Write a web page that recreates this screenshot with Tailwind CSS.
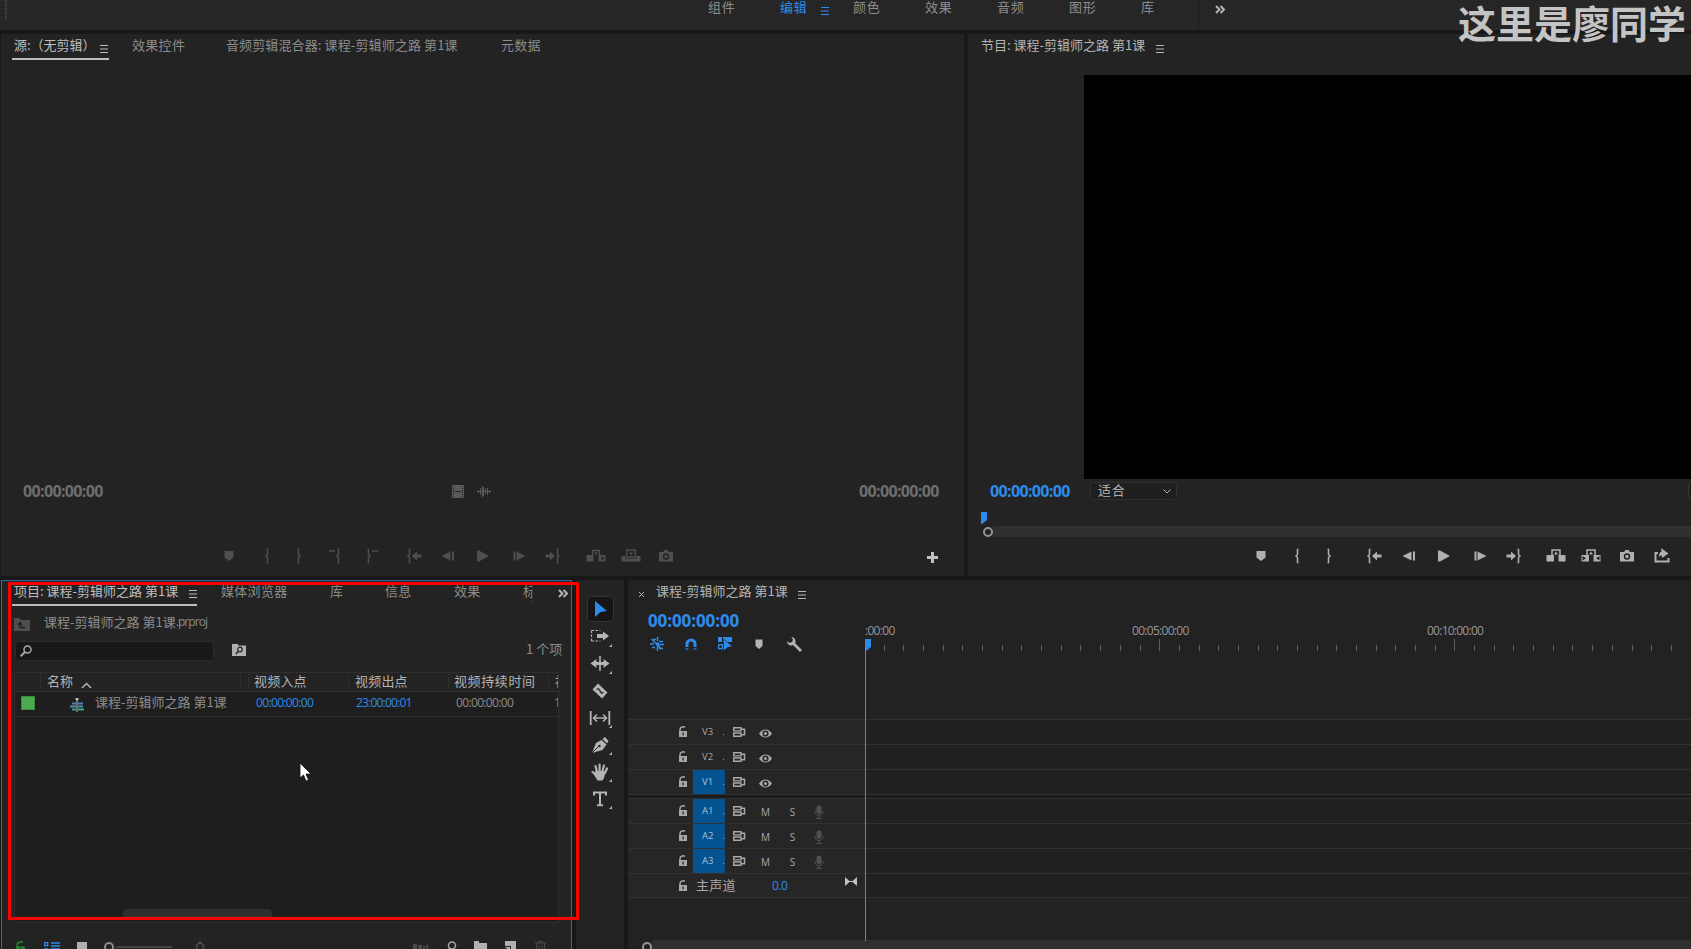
<!DOCTYPE html>
<html lang="zh-CN">
<head>
<meta charset="utf-8">
<meta name="viewport" content="width=device-width,initial-scale=1">
<title>课程-剪辑师之路 第1课</title>
<script src="https://cdn.jsdelivr.net/npm/@tailwindcss/browser@4"></script>
</head>
<body class="relative w-[1691px] h-[949px] overflow-hidden bg-[#181818] text-[#8c8c8c] text-[13px] leading-4 whitespace-nowrap font-['Noto_Sans_CJK_SC','Open_Sans',sans-serif] select-none">

<!-- ICONS -->
<svg class="hidden">
  <symbol id="menu" viewBox="0 0 8 8"><path d="M0 .5h8M0 4h8M0 7.5h8" stroke="currentColor"/></symbol>
  <symbol id="more" viewBox="0 0 10 9"><path d="M1 1l3.5 3.5L1 8M5.5 1L9 4.5 5.5 8" fill="none" stroke="currentColor" stroke-width="2"/></symbol>
  <symbol id="marker" viewBox="0 0 24 24"><path d="M7.5 7h9v6.5L12 17l-4.5-3.500z" fill="currentColor"/></symbol>
  <symbol id="in" viewBox="0 0 24 24"><path d="M13.500 5.500h-1v5L11 12l1.500 1.500v5h1" fill="none" stroke="currentColor" stroke-width="1.500"/></symbol>
  <symbol id="out" viewBox="0 0 24 24"><path d="M10.500 5.500h1v5L13 12l-1.500 1.500v5h-1" fill="none" stroke="currentColor" stroke-width="1.500"/></symbol>
  <symbol id="vin" viewBox="0 0 24 24"><path d="M6 7h6M16.500 5.500h-1v5L14 12l1.500 1.500v5h1" fill="none" stroke="currentColor" stroke-width="1.500"/></symbol>
  <symbol id="vout" viewBox="0 0 24 24"><path d="M12 7h6M7.500 5.500h1v5L10 12l-1.500 1.500v5h-1" fill="none" stroke="currentColor" stroke-width="1.500"/></symbol>
  <symbol id="goin" viewBox="0 0 24 24"><path d="M8.500 5.500h-1v5L6 12l1.500 1.500v5h1" fill="none" stroke="currentColor" stroke-width="1.500"/><path d="M10 12l5-4.500v3h4.500v3H15v3z" fill="currentColor"/></symbol>
  <symbol id="goout" viewBox="0 0 24 24"><path d="M15.500 5.500h1v5L18 12l-1.500 1.500v5h-1" fill="none" stroke="currentColor" stroke-width="1.500"/><path d="M14 12L9 7.500v3H4.500v3H9v3z" fill="currentColor"/></symbol>
  <symbol id="back" viewBox="0 0 24 24"><path d="M5.500 12l9-4.500v9zM16 7.500h2v9h-2z" fill="currentColor"/></symbol>
  <symbol id="fwd" viewBox="0 0 24 24"><path d="M18.500 12l-9-4.500v9zM6.500 7.500h2v9h-2z" fill="currentColor"/></symbol>
  <symbol id="play" viewBox="0 0 24 24"><path d="M6 6.500h2l10 5.500-10 5.500H6z" fill="currentColor"/></symbol>
  <symbol id="insert" viewBox="0 0 24 24"><path d="M8.500 12V6.500h7V12" fill="none" stroke="currentColor" stroke-width="1.300"/><path d="M2.500 11h7v6.500h-7zM14.500 11h7v6.500h-7z" fill="currentColor"/><path d="M10 8.500h4l-2 3z" fill="currentColor"/><path d="M17.500 12l3 2.200-3 2.300z" fill="#232323"/></symbol>
  <symbol id="overwrite" viewBox="0 0 24 24"><path d="M2.500 12h4v2.500h11V12h4v5.500h-19z" fill="currentColor"/><path d="M7.700 13V6h8.600v7z" fill="none" stroke="currentColor" stroke-width="1.300"/><path d="M10 8.500h4l-2 3z" fill="currentColor"/></symbol>
  <symbol id="lift" viewBox="0 0 24 24"><path d="M8 12V6h8v6" fill="none" stroke="currentColor" stroke-width="1.500"/><path d="M2.500 11H10v6.500H2.500zM14.500 11h7v6.500h-7z" fill="currentColor"/><path d="M10 10.500h4L12 7.500z" fill="currentColor"/></symbol>
  <symbol id="extract" viewBox="0 0 24 24"><path d="M8 12V6h8v6" fill="none" stroke="currentColor" stroke-width="1.500"/><path d="M2.500 11H10v6.500H2.500zM14.500 11h7v6.500h-7z" fill="currentColor"/><path d="M10 10.500h4L12 7.500z" fill="currentColor"/><path d="M3.500 12l3.500 2.300-3.500 2.300zM20.500 12L17 14.300l3.500 2.300z" fill="#232323"/></symbol>
  <symbol id="camera" viewBox="0 0 24 24"><path d="M5 8h4l1.500-2h3L15 8h4v9.500H5z" fill="currentColor"/><circle cx="12" cy="12.500" r="2.500" fill="none" stroke="#232323" stroke-width="1.500"/></symbol>
  <symbol id="export" viewBox="0 0 24 24"><path d="M8 9H5.500v8.500h13V14" fill="none" stroke="currentColor" stroke-width="2"/><path d="M11 4l7.500 5.500L12 14v-2.500c-1.500 0-2.500.5-3 2 0-3.500.500-5.500 2.500-6z" fill="currentColor"/></symbol>
  <symbol id="lock" viewBox="0 0 10 12"><path d="M2 6V3.500C2 .8 6 .2 6.800 1.600" fill="none" stroke="currentColor" stroke-width="1.500"/><path d="M1 5h8v6H1z" fill="currentColor"/><path d="M4.500 6.500h1.300v3H4.500z" fill="#262626"/></symbol>
  <symbol id="target" viewBox="0 0 13 10"><path d="M.7.700h7.300v3.200H.7zM.7 6h7.300v3.300H.7z" fill="none" stroke="currentColor" stroke-width="1.400"/><path d="M8 2.300h3.500v5.500H8" fill="none" stroke="currentColor" stroke-width="1.500"/></symbol>
  <symbol id="eye" viewBox="0 0 13 9"><path d="M0 4.500C3.500-.8 9.500-.8 13 4.500 9.500 9.800 3.500 9.800 0 4.500z" fill="currentColor"/><circle cx="6.500" cy="4.500" r="2.300" fill="none" stroke="#262626" stroke-width="1.600"/></symbol>
  <symbol id="mic" viewBox="0 0 10 14"><rect x="2.500" y=".5" width="5" height="8.500" rx="2.500" fill="currentColor"/><path d="M.8 6c0 6 8.400 6 8.400 0M5 10.500v3M2 13.400h6" fill="none" stroke="currentColor"/></symbol>
  <symbol id="head" viewBox="0 0 6 12"><path d="M0 0h6v8l-5 4H0z" fill="#2d8ceb"/></symbol>
  <symbol id="seq" viewBox="0 0 14 14"><path d="M2 4.500h4v2H2zM8 4.500h5v2H8z" fill="#5b7fb5"/><path d="M0 7.500h6v2H0zM8 7.500h5v2H8z" fill="#4c8fb0"/><path d="M2 10.500h4v2H2zM8 10.500h6v2H8z" fill="#35a58c"/><path d="M7 0v14" stroke="#b9b9b9"/><path d="M5.500 0h3v1.500L7 3 5.500 1.500z" fill="#b9b9b9"/></symbol>
</svg>

<div class="flex flex-col">

  <!-- WORKSPACE BAR -->
  <header class="flex h-[30px] bg-[#262626] pl-[5px]">
    <div class="w-[2px] h-5 bg-[repeating-linear-gradient(#4a4a4a_0_1px,transparent_1px_2px)]"></div>
    <nav class="flex ml-[701px] -mt-px tracking-[0.8px]">
      <span class="w-[72px]">组件</span>
      <span class="w-[41px] text-[#2d8ceb]">编辑</span>
      <svg class="w-2 h-2 mt-2 mr-[24px] text-[#2d8ceb]"><use href="#menu"/></svg>
      <span class="w-[72px]">颜色</span>
      <span class="w-[72px]">效果</span>
      <span class="w-[72px]">音频</span>
      <span class="w-[72px]">图形</span>
      <span class="w-[57px]">库</span>
    </nav>
    <div class="w-px h-full bg-[#1c1c1c]"></div>
    <svg class="w-[10px] h-[9px] mt-[5px] ml-4 text-[#b4b4b4]"><use href="#more"/></svg>
  </header>

  <div class="flex h-[542px] mt-1 pl-px gap-1">

    <!-- SOURCE MONITOR -->
    <section class="flex flex-col w-[963px] bg-[#232323]">
      <div class="flex h-[26px] pl-[11px]">
        <div class="flex w-[97px] h-[26px] border-b-2 border-[#bdbdbd] pl-[2px] pt-[3px] text-[#bdbdbd]">
          <span class="w-[86px]">源:（无剪辑）</span>
          <svg class="w-2 h-2 mt-2"><use href="#menu"/></svg>
        </div>
        <span class="ml-[23px] pt-[3px] w-[94px] tracking-[0.3px]">效果控件</span>
        <span class="pt-[3px] w-[275px] tracking-[0.12px]">音频剪辑混合器: 课程-剪辑师之路 第1课</span>
        <span class="pt-[3px] tracking-[0.3px]">元数据</span>
      </div>
      <div class="flex items-center h-[24px] mt-[419px] pl-[22px] font-['Open_Sans'] font-bold text-[16px] tracking-[-0.65px] text-[#6e6e6e]">
        <span class="w-[429px] shrink-0">00:00:00:00</span>
        <svg class="w-3 h-[13px] mr-[13px] shrink-0" viewBox="0 0 12 13"><path d="M0 0h12v13H0z" fill="#5a5a5a"/><path d="M1.500 1v12M10.500 1v12" stroke="#232323" stroke-dasharray="1 1"/><path d="M3 6.500h6" stroke="#232323"/></svg>
        <svg class="w-[14px] h-[11px] mr-[368px] shrink-0" viewBox="0 0 14 11"><path d="M0 5.500h14M1.500 4v3M3.500 2v7M5.500 0v11M6.500 1v9M8.500 3v5M10.500 2v7M12.500 4v3" stroke="#5a5a5a"/></svg>
        <span>00:00:00:00</span>
      </div>
      <div class="flex mt-[41px] pl-[216px] text-[#4f4f4f]">
        <svg class="w-6 h-6 shrink-0"><use href="#marker"/></svg>
        <svg class="w-6 h-6 ml-[14px] shrink-0"><use href="#in"/></svg>
        <svg class="w-6 h-6 ml-2 shrink-0"><use href="#out"/></svg>
        <svg class="w-6 h-6 ml-3 shrink-0"><use href="#vin"/></svg>
        <svg class="w-6 h-6 ml-[13px] shrink-0"><use href="#vout"/></svg>
        <svg class="w-6 h-6 ml-[18px] shrink-0"><use href="#goin"/></svg>
        <svg class="w-6 h-6 ml-[10px] shrink-0"><use href="#back"/></svg>
        <svg class="w-6 h-6 ml-[11px] shrink-0"><use href="#play"/></svg>
        <svg class="w-6 h-6 ml-3 shrink-0"><use href="#fwd"/></svg>
        <svg class="w-6 h-6 ml-[10px] shrink-0"><use href="#goout"/></svg>
        <svg class="w-6 h-6 ml-[19px] shrink-0"><use href="#insert"/></svg>
        <svg class="w-6 h-6 ml-[11px] shrink-0"><use href="#overwrite"/></svg>
        <svg class="w-6 h-6 ml-[11px] shrink-0"><use href="#camera"/></svg>
        <svg class="w-[11px] h-[11px] ml-[249px] mt-2 shrink-0 text-[#c0c0c0]" viewBox="0 0 11 11"><path d="M5.500 0v11M0 5.500h11" stroke="currentColor" stroke-width="3"/></svg>
      </div>
    </section>

    <!-- PROGRAM MONITOR -->
    <section class="flex flex-col w-[723px] bg-[#232323]">
      <div class="flex h-[41px] pl-[13px] pt-[3px] text-[#b4b4b4]">
        <span class="w-[175px]">节目: 课程-剪辑师之路 第1课</span>
        <svg class="w-2 h-2 mt-2"><use href="#menu"/></svg>
      </div>
      <div class="h-[404px] ml-[116px] bg-black"></div>
      <div class="flex items-center h-[24px] pl-[22px] overflow-hidden">
        <span class="w-[100px] shrink-0 font-['Open_Sans'] font-bold text-[16px] tracking-[-0.65px] text-[#2d8ceb]">00:00:00:00</span>
        <div class="flex items-center w-[87px] h-[18px] shrink-0 rounded-sm border border-[#303030] bg-[#1f1f1f] pl-[7px] text-[#b4b4b4]">
          <span class="w-[65px] tracking-[0.8px] -mt-0.5">适合</span>
          <svg class="w-2 h-[5px] shrink-0" viewBox="0 0 8 5"><path d="M.5.5L4 4l3.500-3.500" fill="none" stroke="currentColor"/></svg>
        </div>
        <div class="w-4 h-[18px] ml-[511px] shrink-0 rounded-sm border border-[#383838] bg-[#1f1f1f]"></div>
      </div>
      <svg class="w-[6px] h-3 mt-[9px] ml-[13px]"><use href="#head"/></svg>
      <div class="flex items-center h-[11px] mt-0.5 ml-[15px]">
        <div class="w-[10px] h-[10px] rounded-full border-2 border-[#949494]"></div>
        <div class="flex-1 h-[11px] bg-[#303030]"></div>
      </div>
      <div class="flex mt-[7px] pl-[281px] text-[#b0b0b0]">
        <svg class="w-6 h-6"><use href="#marker"/></svg>
        <svg class="w-6 h-6 ml-3"><use href="#in"/></svg>
        <svg class="w-6 h-6 ml-2"><use href="#out"/></svg>
        <svg class="w-6 h-6 ml-[21px]"><use href="#goin"/></svg>
        <svg class="w-6 h-6 ml-[11px]"><use href="#back"/></svg>
        <svg class="w-6 h-6 ml-[11px]"><use href="#play"/></svg>
        <svg class="w-6 h-6 ml-3"><use href="#fwd"/></svg>
        <svg class="w-6 h-6 ml-[10px]"><use href="#goout"/></svg>
        <svg class="w-6 h-6 ml-[18px]"><use href="#lift"/></svg>
        <svg class="w-6 h-6 ml-[11px]"><use href="#extract"/></svg>
        <svg class="w-6 h-6 ml-3"><use href="#camera"/></svg>
        <svg class="w-6 h-6 ml-[11px]"><use href="#export"/></svg>
      </div>
    </section>
  </div>

  <div class="flex h-[369px] mt-1 pl-px gap-1">

    <!-- PROJECT PANEL -->
    <section class="flex flex-col w-[571px] border border-b-0 border-[#2f6ca8] bg-[#232323]">
      <div class="flex h-[25px] pl-[10px] tracking-[0.3px]">
        <div class="flex w-[185px] h-[25px] border-b-2 border-[#bdbdbd] pl-[2px] pt-[2px] text-[#bdbdbd]">
          <span class="w-[175px] tracking-normal">项目: 课程-剪辑师之路 第1课</span>
          <svg class="w-2 h-2 mt-[7px]"><use href="#menu"/></svg>
        </div>
        <span class="ml-[24px] pt-[2px] w-[109px]">媒体浏览器</span>
        <span class="pt-[2px] w-[55px]">库</span>
        <span class="pt-[2px] w-[69px]">信息</span>
        <span class="pt-[2px] w-[69px]">效果</span>
        <span class="mt-[2px] w-[10px] h-[20px] overflow-hidden border-r border-[#353535]">标</span>
        <svg class="w-[10px] h-[9px] mt-2 ml-[25px] text-[#b4b4b4]"><use href="#more"/></svg>
      </div>
      <div class="flex pl-3 mt-2">
        <svg class="w-4 h-[13px] mt-[4px] mr-[14px]" viewBox="0 0 16 13"><path d="M0 0h6v2h10v11H0z" fill="#4d4d4d"/><path d="M11 9.500H6V5M4 7l2-2.500L8 7" fill="none" stroke="#1f1f1f" stroke-width="1.300"/></svg>
        <span>课程-剪辑师之路 第1课</span><span class="font-['Open_Sans'] text-[12px] tracking-[-0.9px]">.prproj</span>
      </div>
      <div class="flex items-center h-5 pl-[13px] mt-[10px]">
        <div class="flex items-center w-[199px] h-5 pl-[4px] shrink-0 rounded-sm border border-[#2c2c2c] bg-[#181818]">
          <svg class="w-3 h-3" viewBox="0 0 12 12"><circle cx="7.500" cy="4.500" r="3.500" fill="none" stroke="#a8a8a8" stroke-width="1.500"/><path d="M5 7L.7 11.300" stroke="#a8a8a8" stroke-width="2"/></svg>
        </div>
        <svg class="w-[14px] h-3 ml-[18px] mr-[280px] -mt-0.5 shrink-0" viewBox="0 0 14 12"><path d="M0 0h6v1.500h8V12H0z" fill="#b0b0b0"/><circle cx="8" cy="5.500" r="2.300" fill="none" stroke="#232323" stroke-width="1.200"/><path d="M6.500 7.200L3.800 10" stroke="#232323" stroke-width="1.500"/></svg>
        <span class="-mt-1">1 个项</span>
      </div>
      <!-- clip list -->
      <div class="flex flex-col w-[545px] h-[251px] mt-[11px] ml-3 border border-[#2e2e2e] bg-[#1e1e1e]">
        <div class="flex items-center h-[19px] border-b border-[#303030] bg-[#232323] text-[#b4b4b4] overflow-hidden">
          <div class="w-[26px] h-[19px] shrink-0 border-r border-[#2e2e2e]"></div>
          <div class="flex w-[200px] h-[19px] pl-[6px] shrink-0 border-r border-[#2e2e2e]"><span class="w-[34px]">名称</span><svg class="w-[11px] h-[7px] mt-[9px]" viewBox="0 0 11 7"><path d="M1 6l4.500-4.500L10 6" fill="none" stroke="currentColor" stroke-width="1.500"/></svg></div>
          <div class="w-[8px] h-[19px] shrink-0 border-r border-[#2e2e2e]"></div>
          <div class="w-[100px] h-[19px] pl-[5px] shrink-0 border-r border-[#2e2e2e] tracking-[0.2px]">视频入点</div>
          <div class="w-[100px] h-[19px] pl-[6px] shrink-0 border-r border-[#2e2e2e] tracking-[0.2px]">视频出点</div>
          <div class="w-[100px] h-[19px] pl-[5px] shrink-0 tracking-[0.6px] border-r border-[#2e2e2e]">视频持续时间</div>
          <div class="w-[10px] h-[19px] pl-[6px] overflow-hidden">视</div>
        </div>
        <div class="flex items-center h-[25px] border-b border-[#2c2c2c] pl-[6px] pb-1 overflow-hidden">
          <div class="w-[14px] h-[14px] shrink-0 mt-0.5 bg-[#4caa50] border border-[#3b8a40]"></div>
          <svg class="w-[14px] h-[14px] shrink-0 ml-[35px] mr-[11px] mt-[5px]"><use href="#seq"/></svg>
          <span class="w-[161px] shrink-0">课程-剪辑师之路 第1课</span>
          <span class="w-[100px] shrink-0 mt-0.5 font-['Open_Sans'] text-[12px] tracking-[-0.65px] text-[#2d8ceb]">00:00:00:00</span>
          <span class="w-[100px] shrink-0 mt-0.5 font-['Open_Sans'] text-[12px] tracking-[-0.8px] text-[#2d8ceb]">23:00:00:01</span>
          <span class="w-[98px] shrink-0 mt-0.5 font-['Open_Sans'] text-[12px] tracking-[-0.65px]">00:00:00:00</span>
          <span class="w-[6px] mt-0.5 overflow-hidden font-['Open_Sans'] text-[12px]">1</span>
        </div>
        <div class="w-[149px] h-[11px] mt-[192px] ml-[108px] rounded-t-sm bg-[#2f2f2f] shrink-0"></div>
      </div>
      <div class="flex mt-[18px] h-[8px] pl-[13px] text-[#a8a8a8] overflow-hidden">
        <svg class="w-[11px] h-[13px] shrink-0 text-[#1c8a2c]"><use href="#lock"/></svg>
        <svg class="w-4 h-[13px] ml-[18px] shrink-0 text-[#2d8ceb]" viewBox="0 0 16 13"><path d="M.7 1.700h3v3h-3zM.7 8h3v3h-3zM7 2h9M7 5h9M7 8h9M7 11h9" fill="none" stroke="currentColor" stroke-width="1.300"/></svg>
        <div class="w-[10px] h-[10px] ml-[17px] mt-px shrink-0 bg-[#b0b0b0]"></div>
        <div class="w-[10px] h-[10px] ml-[17px] mt-px shrink-0 rounded-full border-2 border-[#8c8c8c]"></div>
        <div class="w-[56px] h-[2px] ml-[2px] mt-[5px] shrink-0 bg-[#454545]"></div>
        <svg class="w-[10px] h-3 ml-[23px] shrink-0 text-[#4d4d4d]" viewBox="0 0 10 12"><path d="M1 5l4-4 4 4-1 1v5M1 5l1 1v5" fill="none" stroke="currentColor" stroke-width="1.500"/></svg>
        <svg class="w-[15px] h-3 ml-[208px] mt-px shrink-0 text-[#4a4a4a]" viewBox="0 0 15 12"><path d="M0 2h4v10H0zM5 3h4v9H5zM10 4h2v8h-2zM13 3h2v9h-2z" fill="currentColor"/></svg>
        <svg class="w-[10px] h-[13px] ml-[19px] shrink-0" viewBox="0 0 10 13"><circle cx="5" cy="4.500" r="3.500" fill="none" stroke="currentColor" stroke-width="1.500"/><path d="M3 7L0 12" stroke="currentColor" stroke-width="2"/></svg>
        <svg class="w-[13px] h-3 ml-[17px] shrink-0" viewBox="0 0 13 12"><path d="M0 0h5v2h8v10H0z" fill="#b0b0b0"/></svg>
        <svg class="w-[11px] h-3 ml-[18px] shrink-0" viewBox="0 0 11 12"><path d="M0 0h11v12H6V5H0z" fill="#b0b0b0"/><path d="M0 6h5v4z" fill="#b0b0b0"/></svg>
        <svg class="w-[11px] h-3 ml-[19px] shrink-0 text-[#4a4a4a]" viewBox="0 0 11 12"><path d="M0 2h11M3.500 2V.5h4V2M1.500 2v10M4 4v8M7 4v8M9.500 2v10" fill="none" stroke="currentColor"/></svg>
      </div>
    </section>

    <!-- TOOLS -->
    <section class="flex flex-col items-center w-[48px] bg-[#232323] pt-4 text-[#b4b4b4]">
      <div class="flex items-center justify-center w-[27px] h-[26px] rounded-sm border border-[#333] bg-[#161616]">
        <svg class="w-3 h-4 ml-px" viewBox="0 0 12 16"><path d="M0 0l12 10-6.500 1L0 16z" fill="#2d8ceb"/></svg>
      </div>
      <svg class="w-6 h-[27px] mt-[2px]" viewBox="0 0 24 27"><path d="M3.500 6.500h9M3.500 17h9M3.500 6.500V17" fill="none" stroke="currentColor" stroke-width="1.200" stroke-dasharray="2.500 1.500"/><path d="M9 10h6V7.500L21 12l-6 4.500V14H9z" fill="currentColor"/><path d="M24 20v3h-3z" fill="currentColor"/></svg>
      <svg class="w-6 h-[27px]" viewBox="0 0 24 27"><path d="M12 5v15" stroke="currentColor" stroke-width="1.600"/><path d="M2.500 12.500L8.500 8v3h7V8l6 4.500-6 4.500v-3h-7v3z" fill="currentColor"/><path d="M24 20v3h-3z" fill="currentColor"/></svg>
      <svg class="w-6 h-[27px]" viewBox="0 0 24 27"><path d="M10 5.500l9.500 9-5.500 6-9.500-9z" fill="currentColor"/><path d="M8.500 11.500l2-.8 3 4.500 2-.7" fill="none" stroke="#232323" stroke-width="1.300"/></svg>
      <svg class="w-6 h-[27px]" viewBox="0 0 24 27"><path d="M2.700 6v14M21.300 6v14" stroke="currentColor" stroke-width="1.800"/><path d="M5.500 13h13M9 9.500L5.500 13 9 16.500M15 9.500l3.500 3.500-3.500 3.500" fill="none" stroke="currentColor" stroke-width="1.500"/><path d="M24 20v3h-3z" fill="currentColor"/></svg>
      <svg class="w-6 h-[27px]" viewBox="0 0 24 27"><path d="M13.500 8l5 4.500-4 5.500L4 21l4-10z" fill="currentColor"/><path d="M14.500 7L17 5l3.500 4-1.500 2.500z" fill="currentColor"/><path d="M4 21l7-7" stroke="#232323"/><circle cx="11.500" cy="14" r="1.200" fill="#232323"/><path d="M24 20v3h-3z" fill="currentColor"/></svg>
      <svg class="w-6 h-[27px]" viewBox="0 0 24 27"><path d="M9 13L7.500 7M11.600 12V5.500M14.500 12L16 6.500M17 14l2-4.500M8 16l-3.500-3" stroke="currentColor" stroke-width="2.200" stroke-linecap="round"/><path d="M7.500 12h10.300L16 19l-1.500 2.500h-5L5.500 15z" fill="currentColor"/><path d="M24 20v3h-3z" fill="currentColor"/></svg>
      <svg class="w-6 h-[27px]" viewBox="0 0 24 27"><path d="M6 9.500V6.500h12v3M12 6.500V19M9 19.200h6" fill="none" stroke="currentColor" stroke-width="2"/><path d="M24 20v3h-3z" fill="currentColor"/></svg>
    </section>

    <!-- TIMELINE -->
    <section class="flex flex-col w-[1063px] bg-[#222222]">
      <div class="flex h-[59px]">
        <div class="w-[237px] shrink-0">
          <div class="flex pt-[3px] pl-[11px] text-[#b4b4b4]">
            <svg class="w-[5px] h-[5px] mt-[9px] mr-[12px]" viewBox="0 0 5 5"><path d="M0 0l5 5M5 0L0 5" stroke="currentColor"/></svg>
            <span class="w-[142px]">课程-剪辑师之路 第1课</span>
            <svg class="w-2 h-2 mt-2"><use href="#menu"/></svg>
          </div>
          <div class="pl-5 mt-3 h-5 leading-5 font-['Open_Sans'] font-bold text-[17px] tracking-[-0.1px] text-[#2d8ceb]">00:00:00:00</div>
        </div>
        <div class="flex items-end h-[59px] text-[12px] font-['Open_Sans'] text-[#969696]">
          <span class="w-[267px] tracking-[-0.7px]">:00:00</span>
          <span class="w-[295px] tracking-[-0.7px]">00:05:00:00</span>
          <span class="tracking-[-0.75px]">00:10:00:00</span>
        </div>
      </div>
      <div class="flex h-[13px] text-[#2d8ceb]">
        <div class="flex items-center w-[237px] h-3 pl-[22px] mt-[-3px] shrink-0">
          <svg class="w-[14px] h-[14px] mt-1 mr-[21px] shrink-0" viewBox="0 0 14 14"><path d="M7.500 0v4M7.500 9v5M3 2.500h3M9 4.500h4M0 7h4M9 7.500h5M2 10.500h3M9 11.500h4M1.500 2l10 10" stroke="currentColor" stroke-width="1.500"/><path d="M6 5.500h3v3H6z" fill="currentColor"/></svg>
          <svg class="w-3 h-[13px] mt-1 mr-[21px] shrink-0" viewBox="0 0 12 13"><path d="M2 9V6a4 4 0 018 0v3" fill="none" stroke="currentColor" stroke-width="3"/><path d="M.5 11h3M8.500 11h3" stroke="#1f5f9f" stroke-width="2"/></svg>
          <svg class="w-[15px] h-[14px] mt-1 mr-[23px] shrink-0" viewBox="0 0 15 14"><path d="M0 0h4v5H0zM5 0h9v5H5z" fill="currentColor"/><path d="M.7 7.700h3.600v4H.7z" fill="none" stroke="currentColor" stroke-width="1.300"/><path d="M5.500 2l9 7.500-4.500.8L5.500 14z" fill="currentColor" stroke="#222" stroke-width=".6"/></svg>
          <svg class="w-6 h-6 -ml-1.5 mt-1 mr-[15px] text-[#b4b4b4] shrink-0" viewBox="2 0 24 24"><path d="M7.500 7.500h7V14L11 17l-3.500-3z" fill="currentColor"/></svg>
          <svg class="w-[15px] h-[15px] mt-1 ml-[-2px] shrink-0 text-[#b4b4b4]" viewBox="0 0 14 14"><path d="M5 5l8 8" stroke="currentColor" stroke-width="2.600"/><path d="M4 0a4 4 0 11-4 4l2.500 1.500L5 4.500 5.500 2z" fill="currentColor"/></svg>
        </div>
        <svg id="ruler" class="w-[826px] h-3" viewBox="0 0 826 12"></svg>
      </div>

      <div id="tracks" class="flex flex-col mt-[68px] text-[10px] font-['Open_Sans','Noto_Sans_CJK_SC'] text-[#a8a8a8]"></div>

      <div class="flex h-[9px] mt-[42px] pl-[14px] overflow-hidden">
        <div class="w-[10px] h-[10px] mt-0.5 rounded-full border-2 border-[#949494] shrink-0"></div>
        <div class="flex-1 h-[9px] bg-[#303030]"></div>
      </div>
    </section>
  </div>
</div>

<!-- playhead -->
<div class="absolute left-[865px] top-[651px] w-px h-[290px] bg-[#3d8fe0]"></div>
<svg class="absolute left-[865px] top-[639px] w-[6px] h-3"><use href="#head"/></svg>

<!-- highlight frame -->
<div class="absolute left-2 top-[582px] w-[571px] h-[338px] border-[3px] border-[#fb0000]"></div>

<!-- mouse pointer -->
<svg class="absolute left-[299px] top-[762px] w-[13px] h-[20px]" viewBox="0 0 13 20"><path d="M1 1v15l3.500-3 2.500 6 2.500-1L7 12h5z" fill="#fff" stroke="#111" stroke-width=".8"/></svg>

<!-- watermark -->
<div class="absolute left-[1458px] -top-px leading-[46px] text-[38px] font-bold text-[#c4c4c4]">这里是廖同学</div>

<script>
/* === RULER === */
const ruler = document.getElementById('ruler');
let ticks = '';
for (let i = 1; i < 43; i++) {
  const x = Math.round(i * 19.68 - 1), major = i % 15 === 0;
  ticks += `<rect x="${x}" y="${major ? 0 : 6}" width="1" height="${major ? 12 : 6}" fill="#5c5c5c"/>`;
}
ruler.innerHTML = ticks;

/* === TRACKS === */
const icon = (id, cls) => `<svg class="shrink-0 ${cls}"><use href="#${id}"/></svg>`;
const track = name => {
  const on = name !== 'V3' && name !== 'V2';
  const audio = name[0] === 'A';
  return `<div class="flex border-t border-[#313131]">
    <div class="flex items-center w-[237px] h-[24px] bg-[#262626] pl-[50px]">
      ${icon('lock', 'w-[10px] h-3 mr-[5px]')}
      <div class="flex items-center justify-between w-[32px] h-[24px] pl-[9px] pr-[1px] text-[9.5px] ${on ? 'bg-[#04528f] text-[#a9c3dc]' : ''}"><span>${name}</span><span class="w-px h-px mt-1 bg-[#999]"></span></div>
      ${icon('target', 'w-[13px] h-[10px] ml-[8px] mr-[13px]')}
      ${audio ? `<span class="w-[13px] text-center mt-0.5">M</span><span class="w-[13px] text-center ml-[14px] mt-0.5">S</span>${icon('mic', 'w-[10px] h-[14px] ml-[15px] mt-0.5 text-[#505050]')}` : icon('eye', 'w-[13px] h-[9px] mt-0.5')}
    </div>
    <div class="flex-1 bg-[#202020]"></div>
  </div>`;
};
const master = `<div class="flex border-y border-[#313131]">
    <div class="flex items-center w-[237px] h-[23px] bg-[#262626] pl-[50px]">
      ${icon('lock', 'w-[10px] h-3 mr-[8px]')}
      <span class="w-[76px] text-[13px] -mt-0.5 tracking-[0.3px]">主声道</span>
      <span class="w-[73px] text-[12px] tracking-[-0.5px] text-[#2d8ceb]">0.0</span>
      <svg class="w-3 h-[9px] mb-2" viewBox="0 0 12 9"><path d="M0 0l5 4.500L0 9zM12 0L7 4.500 12 9z" fill="#c0c0c0"/><path d="M4 4.500h4" stroke="#c0c0c0"/></svg>
    </div>
    <div class="flex-1 bg-[#202020]"></div>
  </div>`;
document.getElementById('tracks').innerHTML =
  ['V3', 'V2', 'V1'].map(track).join('') +
  '<div class="h-1 border-t border-[#313131] bg-[#1d1d1d]"></div>' +
  ['A1', 'A2', 'A3'].map(track).join('') + master;
</script>
</body>
</html>
